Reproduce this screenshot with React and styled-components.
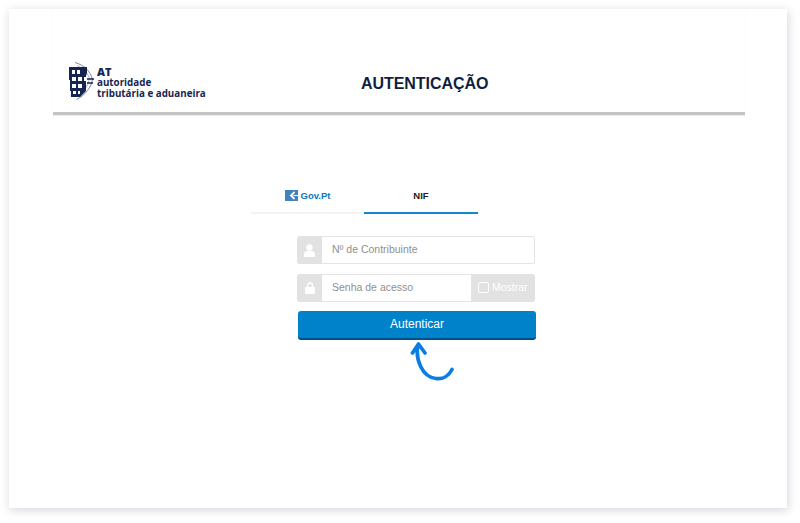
import React from 'react'
import styled, { createGlobalStyle } from 'styled-components'

const Global = createGlobalStyle`
  html, body {
    margin: 0;
    background: #fff;
    font-family: "Liberation Sans", Arial, sans-serif;
  }
`

const Page = styled.div`
  width: 800px;
  height: 523px;
  box-sizing: border-box;
  padding: 9px 13px 15px 9px;
  overflow: hidden;
`

const Card = styled.main`
  height: 100%;
  box-sizing: border-box;
  padding: 0 42px 0 44px;
  background: #fff;
  box-shadow: 1px 2px 9px rgba(120, 125, 150, 0.32);
`

const Header = styled.header`
  height: 106px;
  box-sizing: border-box;
  padding: 54px 0 0 16px;
  display: flex;
  align-items: flex-start;
  border-bottom: 3px solid #c4c4c4;
  box-shadow: 0 1px 1px rgba(0, 0, 0, 0.08);
`

const Logo = styled.div`
  width: 137px;
  display: flex;
  gap: 3px;
  margin-top: -1px;
  svg {
    flex: none;
  }
`

const LogoText = styled.div`
  color: #17284f;
  font-family: "Open Sans", sans-serif;
  font-weight: 700;
  font-size: 9.8px;
  line-height: 11px;
  white-space: nowrap;
  padding-top: 4px;
`

const LogoAt = styled.div`
  font-size: 11px;
  line-height: 11px;
  font-weight: 800;
`

const Title = styled.h1`
  margin: 12px 0 0 155px;
  color: #101f3e;
  font-size: 16px;
  line-height: 18px;
  font-weight: 700;
  letter-spacing: -0.05px;
`

const Tabs = styled.nav`
  width: 227px;
  margin: 62px 0 0 198px;
  display: flex;
`

const Tab = styled.div`
  width: ${p => (p.$active ? '114px' : '113px')};
  height: 37px;
  box-sizing: border-box;
  padding-top: 1px;
  display: flex;
  align-items: center;
  justify-content: center;
  gap: 3px;
  font-size: 9.5px;
  font-weight: 700;
  color: ${p => (p.$active ? '#222' : '#0b77bd')};
  border-bottom: 2px solid ${p => (p.$active ? '#1487d2' : '#f3f3f3')};
`

const Form = styled.form`
  width: 238px;
  margin: 22px 0 0 244px;
  display: flex;
  flex-direction: column;
`

const Group = styled.div`
  height: 28px;
  display: flex;
  margin-bottom: 10px;
  box-sizing: border-box;
`

const Addon = styled.span`
  width: 25px;
  flex: none;
  display: flex;
  align-items: center;
  justify-content: center;
  background: #e2e2e2;
  border-radius: 3px 0 0 3px;
`

const Field = styled.div`
  flex: 1;
  display: flex;
  align-items: center;
  padding: 0 0 2px 10px;
  color: #8f8f8f;
  font-size: 10.5px;
  background: #fff;
  border: 1px solid #e4e4e4;
  border-left: 0;
  border-radius: ${p => (p.$joined ? '0' : '0 3px 3px 0')};
`

const Toggle = styled.span`
  width: 63px;
  flex: none;
  box-sizing: border-box;
  padding: 0 0 2px 6px;
  display: flex;
  align-items: center;
  gap: 3px;
  background: #e2e2e2;
  color: #fff;
  font-size: 10.5px;
  border-radius: 0 3px 3px 0;
`

const Check = styled.i`
  width: 9px;
  height: 9px;
  border: 1px solid #fff;
  border-radius: 2px;
`

const Submit = styled.button`
  width: 238px;
  height: 29px;
  margin: -1px 0 0 1px;
  padding: 0 0 1px;
  border: 0;
  border-bottom: 2px solid #00508c;
  border-radius: 3px;
  background: #0082ca;
  color: #fff;
  font-family: inherit;
  font-size: 12px;
`

const ArrowWrap = styled.div`
  margin: 1px 0 0 113px;
  height: 42px;
`

const GovMark = () => (
  <svg width="13" height="11" viewBox="0 0 13 11">
    <rect width="13" height="11" fill="#4382bd" />
    <path d="M9.500 2 6 5.500 9.500 9" fill="none" stroke="#fff" strokeWidth="1.800" />
    <path d="M8.500 5.500h4.500" stroke="#fff" strokeWidth="1" />
  </svg>
)

const Shield = () => (
  <svg width="25" height="38" viewBox="0 0 25 38">
    <path d="M6 0.500C15 3 21 9 23.500 17c-1 8-7 16-16 20.500" fill="none" stroke="#7f8aa3" strokeWidth="1" />
    <path d="M8 3.500C14 6 18 10 20.500 16c-1 6-4 12-10 17" fill="none" stroke="#aeb5c4" strokeWidth="1" />
    <path d="M0 5h18v6l-1 3v15l-6 6H2v-6H1V18H0z" fill="#14254f" />
    <path
      d="M3 8h3v4H3zM8 8h3v4H8zM3 15h4v4H3zM9 15h4v4H9zM15 15h2v4h-2zM3 22h4v4H3zM9 22h4v4H9zM4 29h3v3H4zM9 29h2v3H9z"
      fill="#fff"
    />
    <path d="M18 17h7M18 21h6" stroke="#14254f" strokeWidth="1.500" />
  </svg>
)

const UserIcon = () => (
  <svg width="11" height="13" viewBox="0 0 11 13">
    <circle cx="5.500" cy="3.500" r="3.200" fill="#fff" />
    <path d="M0 13V10.500C0 8 2 7 3.500 7h4C9 7 11 8 11 10.500V13z" fill="#fff" />
  </svg>
)

const LockIcon = () => (
  <svg width="10" height="12" viewBox="0 0 10 12">
    <path d="M2.500 6V3.500a2.500 2.500 0 0 1 5 0V6" fill="none" stroke="#fff" strokeWidth="1.400" />
    <rect y="5" width="10" height="7" rx="1" fill="#fff" />
  </svg>
)

const Arrow = () => (
  <svg width="44" height="42" viewBox="0 0 44 42">
    <path
      d="M2.500 12 8.500 3l6.500 9M8 4C5 18 12 36 26 37.500c7 1 13-3 16-9"
      fill="none"
      stroke="#0a7ee3"
      strokeWidth="3.700"
      strokeLinecap="round"
      strokeLinejoin="round"
    />
  </svg>
)

export default function App() {
  return (
    <Page>
      <Global />
      <Card>
        <Header>
          <Logo>
            <Shield />
            <LogoText>
              <LogoAt>AT</LogoAt>
              autoridade
              <br />
              tributária e aduaneira
            </LogoText>
          </Logo>
          <Title>AUTENTICAÇÃO</Title>
        </Header>
        <Tabs>
          <Tab>
            <GovMark />
            Gov.Pt
          </Tab>
          <Tab $active>NIF</Tab>
        </Tabs>
        <Form>
          <Group>
            <Addon>
              <UserIcon />
            </Addon>
            <Field>Nº de Contribuinte</Field>
          </Group>
          <Group>
            <Addon>
              <LockIcon />
            </Addon>
            <Field $joined>Senha de acesso</Field>
            <Toggle>
              <Check />
              Mostrar
            </Toggle>
          </Group>
          <Submit type="button">Autenticar</Submit>
          <ArrowWrap>
            <Arrow />
          </ArrowWrap>
        </Form>
      </Card>
    </Page>
  )
}
